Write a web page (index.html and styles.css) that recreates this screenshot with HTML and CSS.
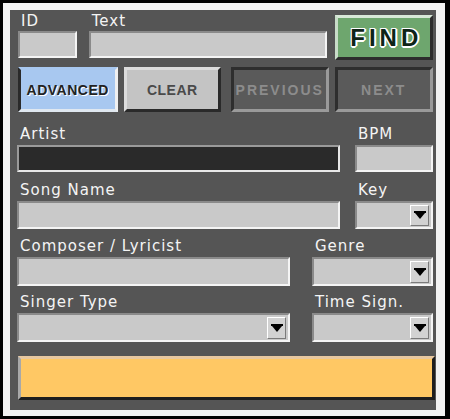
FILE: index.html
```html
<!DOCTYPE html>
<html lang="en">
<head>
    <meta charset="UTF-8">
    <title>Song Search</title>
    <link rel="stylesheet" href="styles.css">
</head>
<body>

<div class="frame">
<div class="panel">

    <div class="row-top">
        <div class="field f-id">
            <label>ID</label>
            <div class="box"></div>
        </div>
        <div class="field f-text">
            <label>Text</label>
            <div class="box"></div>
        </div>
        <button class="btn-find">FIND</button>
    </div>

    <div class="row-buttons">
        <button class="btn btn-advanced">ADVANCED</button>
        <button class="btn btn-clear">CLEAR</button>
        <button class="btn btn-off btn-prev">PREVIOUS</button>
        <button class="btn btn-off btn-next">NEXT</button>
    </div>

    <div class="form-row r1">
        <div class="field w-wide">
            <label>Artist</label>
            <div class="box dark"></div>
        </div>
        <div class="field w-small">
            <label>BPM</label>
            <div class="box"></div>
        </div>
    </div>

    <div class="form-row r2">
        <div class="field w-wide">
            <label>Song Name</label>
            <div class="box"></div>
        </div>
        <div class="field w-small">
            <label>Key</label>
            <div class="box select"><span class="arrow"><svg width="12" height="9" viewBox="0 0 12 9"><rect x="0" y="0" width="12" height="2" fill="#000"/><path d="M1 2 L11 2 L6 8 Z" fill="#000"/></svg></span></div>
        </div>
    </div>

    <div class="form-row r3">
        <div class="field w-mid">
            <label>Composer / Lyricist</label>
            <div class="box"></div>
        </div>
        <div class="field w-med">
            <label>Genre</label>
            <div class="box select"><span class="arrow"><svg width="12" height="9" viewBox="0 0 12 9"><rect x="0" y="0" width="12" height="2" fill="#000"/><path d="M1 2 L11 2 L6 8 Z" fill="#000"/></svg></span></div>
        </div>
    </div>

    <div class="form-row r4">
        <div class="field w-mid">
            <label>Singer Type</label>
            <div class="box select"><span class="arrow"><svg width="12" height="9" viewBox="0 0 12 9"><rect x="0" y="0" width="12" height="2" fill="#000"/><path d="M1 2 L11 2 L6 8 Z" fill="#000"/></svg></span></div>
        </div>
        <div class="field w-med">
            <label>Time Sign.</label>
            <div class="box select"><span class="arrow"><svg width="12" height="9" viewBox="0 0 12 9"><rect x="0" y="0" width="12" height="2" fill="#000"/><path d="M1 2 L11 2 L6 8 Z" fill="#000"/></svg></span></div>
        </div>
    </div>

    <div class="status-bar"></div>

</div>
</div>

</body>
</html>
```

FILE: styles.css
```css
html, body {
    margin: 0;
    background: #000;
}
body {
    padding: 3px 5px 3px 3px;
    font-family: 'DejaVu Sans', sans-serif;
}
.frame {
    background: #f2f2f2;
    padding: 7px 9px 6px 7px;
}
.panel {
    background: #555555;
    width: 426px;
    height: 400px;
    box-sizing: border-box;
    padding: 0 3px 0 7px;
}

/* champs */
.field {
    display: flex;
    flex-direction: column;
}
.field label {
    display: flex;
    align-items: flex-end;
    height: 29px;
    padding: 0 0 3px 3px;
    box-sizing: border-box;
    color: #f4f4f4;
    font-size: 15px;
    letter-spacing: 1px;
    line-height: 15px;
}
.box {
    height: 27px;
    box-sizing: border-box;
    background: #c9c9c9;
    border: 2px solid;
    border-color: #8a8a8a #f4f4f4 #f4f4f4 #8a8a8a;
    position: relative;
}
.box.dark {
    background: #2a2a2a;
    border-color: #9a9a9a #e8e8e8 #e8e8e8 #9a9a9a;
}
.select .arrow {
    position: absolute;
    right: 2px;
    top: 2px;
    bottom: 1px;
    width: 19px;
    box-sizing: border-box;
    background: #d2d2d2;
    border: 1px solid;
    border-color: #ffffff #7a7a7a #7a7a7a #ffffff;
    display: flex;
    align-items: center;
    justify-content: center;
}

/* ligne du haut */
.row-top {
    display: flex;
    height: 50px;
    padding-left: 1px;
}
.row-top label {
    height: 21px;
    padding-bottom: 2px;
}
.f-id { width: 59px; }
.f-text { width: 240px; margin-left: 12px; }
.f-id .box, .f-text .box { height: 27px; }
.btn-find {
    margin: 5px 0 0 8px;
    width: 98px;
    height: 45px;
    background: #6ea66e;
    border: 3px solid;
    border-color: #d8e8d8 #2c2c2c #2c2c2c #c8dcc8;
    font-family: 'Liberation Sans', sans-serif;
    font-weight: bold;
    font-size: 24px;
    letter-spacing: 4px;
    padding: 0 0 0 4px;
    color: #0e2418;
    text-shadow: -1px -1px 0 #fff, 1px -1px 0 #fff, -1px 1px 0 #fff, 1px 1px 0 #fff, 0 2px 0 #fff, 2px 0 0 #fff;
}

/* boutons */
.row-buttons {
    display: flex;
    margin-top: 7px;
    padding-left: 1px;
    height: 45px;
}
.btn {
    height: 45px;
    box-sizing: border-box;
    font-family: 'Liberation Sans', sans-serif;
    font-weight: bold;
    font-size: 14px;
    border: 3px solid;
    padding: 0;
}
.btn-advanced {
    width: 100px;
    background: #a8c8f0;
    border-color: #a8c8f0 #f0f0f0 #e0e8f0 #2a2a2a;
    color: #222;
    letter-spacing: 0.5px;
    text-shadow: 1px 1px 0 #fff;
}
.btn-clear {
    width: 98px;
    margin-left: 6px;
    background: #c4c4c4;
    border-color: #dcdcdc #2a2a2a #2a2a2a #dcdcdc;
    color: #4a4a4a;
    letter-spacing: 0.5px;
}
.btn-off {
    background: #5a5a5a;
    border-color: #2e2e2e #9a9a9a #9a9a9a #2e2e2e;
    color: #8c8c8c;
    letter-spacing: 2px;
}
.btn-prev { width: 98px; margin-left: 10px; }
.btn-next { width: 99px; margin-left: 6px; }

/* lignes du formulaire */
.form-row {
    display: flex;
    justify-content: space-between;
}
.r1 { margin-top: 4px; }
.r2 .box { height: 28px; }
.r3 label { height: 28px; }
.r3 .box { height: 29px; }
.r4 label { height: 27px; }
.r4 .box { height: 29px; }
.w-wide { width: 323px; }
.w-small { width: 78px; }
.w-mid { width: 273px; }
.w-med { width: 121px; }

.status-bar {
    margin: 14px 0 0 1px;
    height: 44px;
    width: 417px;
    box-sizing: border-box;
    background: #ffc864;
    border: 3px solid;
    border-color: #e8c8a0 #1e1e1e #1e1e1e #a8a8a8;
}
```
